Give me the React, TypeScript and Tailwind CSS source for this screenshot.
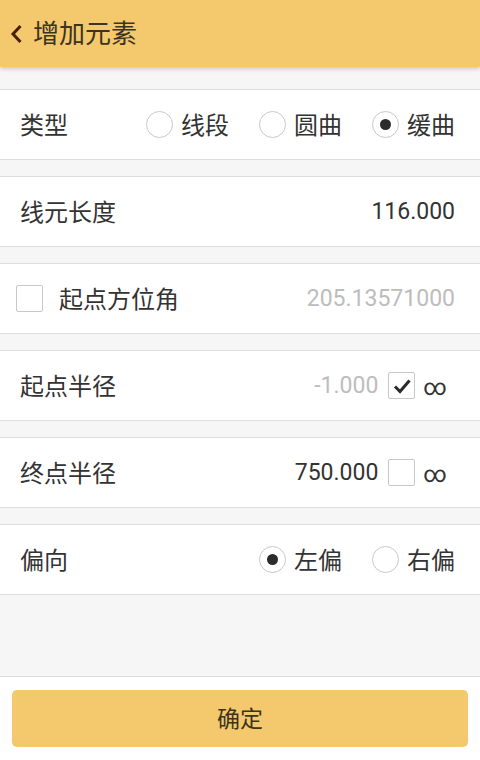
const FONT = { fontFamily: '"Noto Sans", "Noto Sans CJK SC", sans-serif' };
const NUM = { fontFamily: 'Roboto, "Noto Sans", sans-serif' };

function Radio({ checked, label }: { checked?: boolean; label: string }) {
  return (
    <div className="flex items-center gap-[8px]">
      <span className="flex h-[27px] w-[27px] items-center justify-center rounded-full border border-[#c8c8c8] bg-white">
        {checked && <span className="h-[11px] w-[11px] rounded-full bg-[#2b2b2b]" />}
      </span>
      <span className="text-[24px] text-[#333]">{label}</span>
    </div>
  );
}

function Check({ checked }: { checked?: boolean }) {
  return (
    <span className="flex h-[27px] w-[27px] items-center justify-center rounded-[2px] border border-[#c8c8c8] bg-white">
      {checked && (
        <svg width="20" height="20" viewBox="0 0 20 20" fill="none">
          <path d="M3 10.5 L8 15.5 L17.5 4.5" stroke="#2b2b2b" strokeWidth="3" />
        </svg>
      )}
    </span>
  );
}

function Row({ children }: { children: React.ReactNode }) {
  return (
    <div className="flex h-[71px] items-center border-y border-[#dedede] bg-white pl-5 pr-[25px]">
      {children}
    </div>
  );
}

function Infinity() {
  return <span className="mt-[3px] text-[23px] leading-none text-[#333]" style={NUM}>∞</span>;
}

export default function App() {
  return (
    <div className="flex h-[760px] w-[480px] flex-col bg-[#f6f6f6]" style={FONT}>
      <header className="relative z-10 flex h-[67px] items-center bg-[#f4c86c] pl-[10px] shadow-[0_2px_4px_rgba(0,0,0,0.18)]">
        <svg width="13" height="20" viewBox="0 0 13 20" fill="none">
          <path d="M10.5 2 L3 10 L10.5 18" stroke="#4a1d05" strokeWidth="3" />
        </svg>
        <span className="ml-[10px] text-[26px] text-[#3b3420]">增加元素</span>
      </header>

      <main className="flex flex-1 flex-col gap-[16px] pt-[22px]">
        <Row>
          <span className="text-[24px] text-[#333]">类型</span>
          <div className="ml-auto flex items-center gap-[30px]">
            <Radio label="线段" />
            <Radio label="圆曲" />
            <Radio checked label="缓曲" />
          </div>
        </Row>
        <Row>
          <span className="text-[24px] text-[#333]">线元长度</span>
          <span className="ml-auto mt-[2px] text-[23px] text-[#333]" style={NUM}>116.000</span>
        </Row>
        <div className="flex h-[71px] items-center border-y border-[#dedede] bg-white pl-4 pr-[25px]">
          <Check />
          <span className="ml-4 text-[24px] text-[#333]">起点方位角</span>
          <span className="ml-auto mt-[2px] text-[23px] text-[#bdbdbd]" style={NUM}>205.13571000</span>
        </div>
        <Row>
          <span className="text-[24px] text-[#333]">起点半径</span>
          <span className="ml-auto mt-[2px] text-[23px] text-[#bdbdbd]" style={NUM}>-1.000</span>
          <div className="ml-[10px] mr-[8px] flex items-center gap-[8px]">
            <Check checked />
            <Infinity />
          </div>
        </Row>
        <Row>
          <span className="text-[24px] text-[#333]">终点半径</span>
          <span className="ml-auto mt-[2px] text-[23px] text-[#333]" style={NUM}>750.000</span>
          <div className="ml-[10px] mr-[8px] flex items-center gap-[8px]">
            <Check />
            <Infinity />
          </div>
        </Row>
        <Row>
          <span className="text-[24px] text-[#333]">偏向</span>
          <div className="ml-auto flex items-center gap-[30px]">
            <Radio checked label="左偏" />
            <Radio label="右偏" />
          </div>
        </Row>
      </main>

      <footer className="h-[84px] border-t border-[#dcdcdc] bg-white px-3 pt-[13px]">
        <button className="flex h-[57px] w-full items-center justify-center rounded-[5px] bg-[#f4c96d] text-[23px] text-[#3d3418]">
          确定
        </button>
      </footer>
    </div>
  );
}
